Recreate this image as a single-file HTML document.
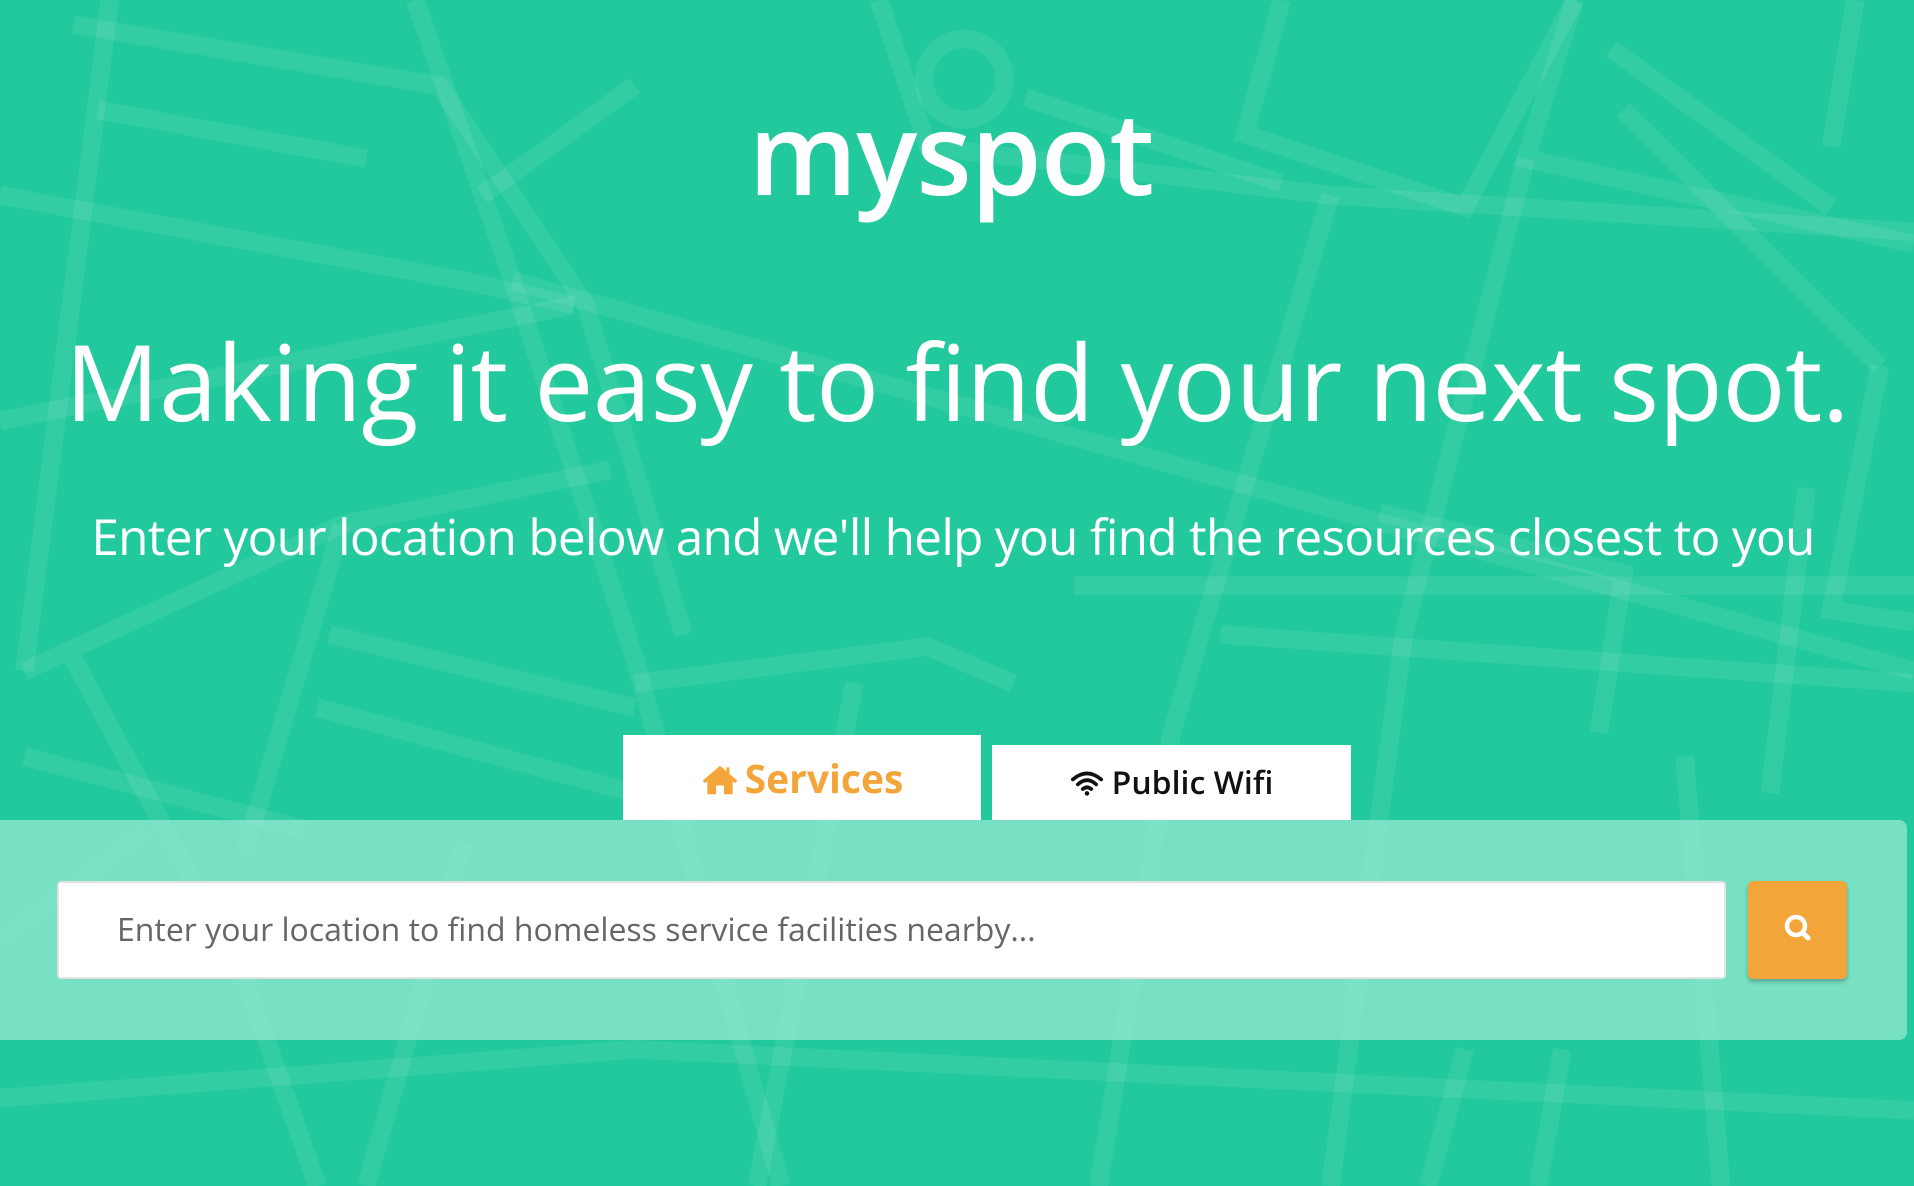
<!DOCTYPE html>
<html><head><meta charset="utf-8"><style>
html,body{margin:0;padding:0}
body{width:1914px;height:1186px;background:#22c99d;position:relative;overflow:hidden;font-family:"Open Sans","Liberation Sans",sans-serif;color:#fff}
svg.bg{position:absolute;left:0;top:0;width:1914px;height:1186px}
.logo{position:absolute;left:-6px;width:1914px;top:77px;text-align:center;font-weight:600;font-size:114px;letter-spacing:-1px;line-height:150px}
.h1{position:absolute;left:0;width:1914px;top:316px;text-align:center;font-size:105px;line-height:130px;white-space:nowrap;letter-spacing:-0.5px}
.sub{position:absolute;left:-4px;width:1914px;top:504px;text-align:center;font-size:49.5px;line-height:64px;white-space:nowrap;letter-spacing:-0.7px}
.tab{position:absolute;background:#fff;text-align:center;font-weight:bold}
.panel{position:absolute;left:0;top:820px;width:1907px;height:220px;background:rgba(150,232,210,0.75);border-radius:0 8px 8px 0}
.input{position:absolute;left:57px;top:881px;height:94px;background:#fff;border:2px solid #e3e3e3;border-radius:4px;color:#666;font-size:32px;line-height:94px;padding-left:58px;box-sizing:content-box;width:1607px}
.btn{position:absolute;left:1748px;top:881px;width:99px;height:98px;background:#f4a53a;border-radius:5px;box-shadow:0 3px 4px rgba(0,0,0,.25)}
</style></head><body>
<svg class="bg" viewBox="0 0 1568 972" preserveAspectRatio="none" fill="none" stroke="rgba(255,255,255,0.08)" stroke-width="15">
<path d="M90 0 L20 550"/><path d="M0 160 L380 230 L470 250"/><path d="M60 20 L360 70 L480 250 L560 520"/><path d="M80 90 L300 130"/>
<path d="M340 0 L420 230 L520 540 L640 972"/><path d="M395 160 L520 70"/><path d="M420 230 L1568 550"/>
<path d="M0 345 L470 250"/><path d="M20 550 L280 430 L500 385"/><path d="M60 540 L200 800 L260 972"/>
<path d="M280 430 L200 700"/><path d="M270 520 L520 580"/><path d="M260 580 L520 650"/><path d="M20 620 L250 680"/>
<path d="M720 0 L760 120 L1090 160 L1568 190"/><circle cx="790" cy="65" r="33"/><path d="M840 80 L1050 150"/>
<path d="M1050 0 L1020 110 L1200 170 L1290 0"/><path d="M1290 0 L1250 130 L1568 200"/><path d="M1320 40 L1500 170"/><path d="M1330 90 L1540 300"/>
<path d="M1090 160 L960 600 L900 972"/><path d="M1250 130 L1150 520 L1090 972"/><path d="M1520 0 L1500 120"/><path d="M1540 300 L1500 500 L1568 510"/>
<path d="M880 480 L1568 480"/><path d="M1130 420 L1330 470 L1310 600"/><path d="M1480 400 L1450 650"/>
<path d="M700 560 L620 972"/><path d="M520 560 L760 530 L830 560"/><path d="M1000 520 L1568 560"/>
<path d="M0 900 L520 860 L1568 910"/><path d="M300 972 L380 690"/><path d="M1200 860 L1170 972"/><path d="M1280 860 L1260 972"/>
<path d="M1380 620 L1410 972"/><path d="M0 770 L120 680"/>
</svg>
<div class="logo">myspot</div>
<div class="h1">Making it easy to find your next spot.</div>
<div class="sub">Enter your location below and we'll help you find the resources closest to you</div>
<div class="tab" style="left:623px;top:735px;width:358px;height:85px;color:#f4a53a;font-size:39px;line-height:88px">
<svg width="38" height="32" viewBox="0 0 24 20" style="vertical-align:-3px;margin-right:6px"><path fill="#f4a53a" d="M12 1 L1 10.5 L2.5 12 L4 10.8 V19 H9.5 V13.5 H14.5 V19 H20 V10.8 L21.5 12 L23 10.5 L18 6.2 V2 H16 V4.5 Z"/></svg>Services</div>
<div class="tab" style="left:992px;top:745px;width:359px;height:75px;color:#111;font-size:32px;line-height:76px;font-weight:600">
<svg width="34" height="26" viewBox="0 0 24 18" style="vertical-align:-2px;margin-right:8px"><g fill="none" stroke="#111" stroke-width="2.6" stroke-linecap="round"><path d="M2 6.5 Q12 -2 22 6.5"/><path d="M5.5 10 Q12 4 18.5 10"/><path d="M9 13.3 Q12 10.8 15 13.3"/></g><circle cx="12" cy="16.3" r="1.6" fill="#111"/></svg>Public Wifi</div>
<div class="panel"></div>
<div class="input">Enter your location to find homeless service facilities nearby...</div>
<div class="btn"><svg width="99" height="98" viewBox="0 0 99 98"><circle cx="48" cy="45" r="9" fill="none" stroke="#fff" stroke-width="4.5"/><path d="M54.5 51.5 L60 57" stroke="#fff" stroke-width="5" stroke-linecap="round"/></svg></div>
</body></html>
